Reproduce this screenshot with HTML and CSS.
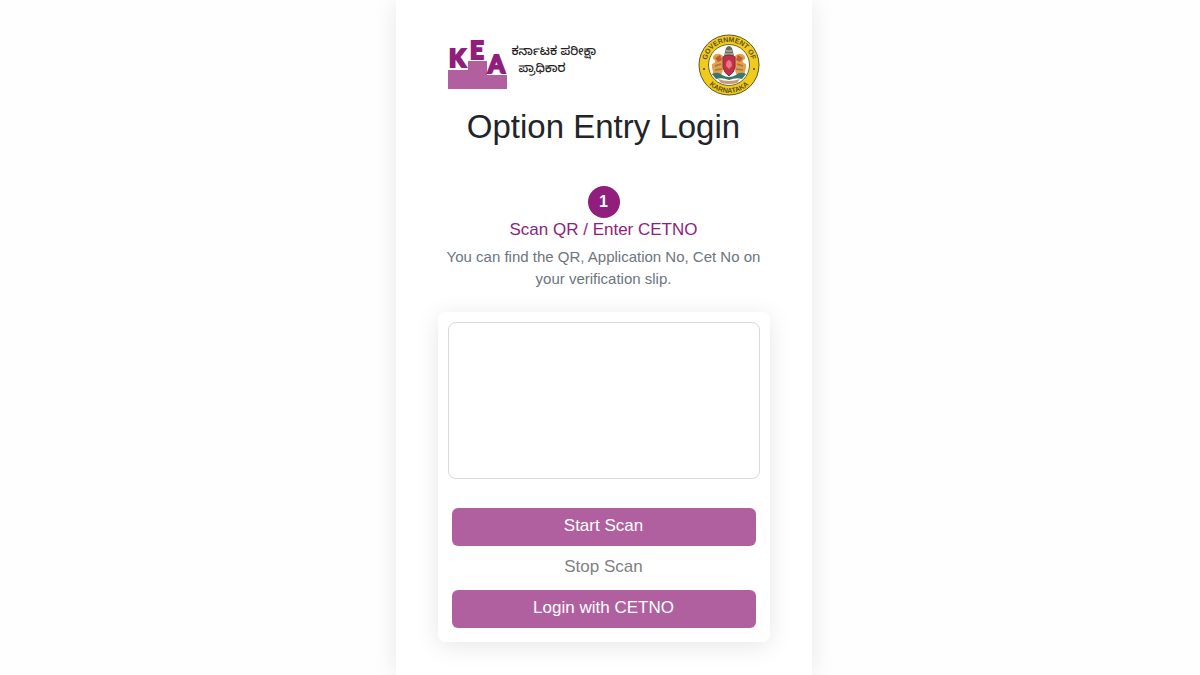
FILE: index.html
```html
<!DOCTYPE html>
<html lang="en">
<head>
    <meta charset="UTF-8">
    <meta name="viewport" content="width=device-width, initial-scale=1.0">
    <title>Option Entry Login</title>
    <link rel="stylesheet" href="styles.css">
</head>
<body>
    <main class="login-container">
        <header class="login-header">
            <div class="brand">
                <svg class="kea-logo" viewBox="0 0 60 52" role="img" aria-label="KEA">
                    <path d="M0 31H20V22H39V36H59V50H0Z" fill="#b25f9f"/>
                    <g class="kea-letters">
                        <text x="1" y="28">K</text>
                        <text x="22" y="20">E</text>
                        <text x="40" y="34">A</text>
                    </g>
                </svg>
                <p class="brand-name" lang="kn">ಕರ್ನಾಟಕ ಪರೀಕ್ಷಾ<span>ಪ್ರಾಧಿಕಾರ</span></p>
            </div>
            <svg class="emblem" viewBox="0 0 62 62" role="img" aria-label="Government of Karnataka">
                <defs>
                    <path id="arc-top" d="M9.100 38A23 23 0 1 1 52.900 38"/>
                    <path id="arc-bottom" d="M5.300 42A28 28 0 0 0 56.700 42"/>
                </defs>
                <circle cx="31" cy="31" r="30" fill="#f0cb1c" stroke="#5d5424"/>
                <circle cx="31" cy="31" r="20.500" fill="#fdfdf8" stroke="#75662a"/>
                <text class="seal-text"><textPath href="#arc-top" startOffset="50%">GOVERNMENT OF</textPath></text>
                <text class="seal-text"><textPath href="#arc-bottom" startOffset="50%">KARNATAKA</textPath></text>
                <circle cx="6" cy="35" r="1" fill="#4a4425"/>
                <circle cx="56" cy="35" r="1" fill="#4a4425"/>
                <!-- lions -->
                <path d="M26 23C21 17 14 20 15 25C18 26 18 29 14 30C13 35 17 38 14 41L23 42L25 36L28 34Z" fill="#e4a14c"/>
                <path d="M36 23C41 17 48 20 47 25C44 26 44 29 48 30C49 35 45 38 48 41L39 42L37 36L34 34Z" fill="#e4a14c"/>
                <path d="M17 24L22 21L24 26L20 28ZM45 24L40 21L38 26L42 28Z" fill="#c45a35"/>
                <path d="M17 32L23 30M17 36L24 35M45 32L39 30M45 36L38 35" stroke="#a4774a" stroke-width="1.500"/>
                <!-- capital and shield -->
                <path d="M26 22L28 14Q31 10 34 14L36 22Z" fill="#626c68"/>
                <path d="M28 17H34M27 20H35" stroke="#e9cf95"/>
                <path d="M25 23Q31 19 37 23V33Q36 39 31 42Q26 39 25 33Z" fill="#c52e49" stroke="#79343d"/>
                <path d="M28 32Q28 27 31 26Q34 27 34 32L31 35Z" fill="#e47b83"/>
                <path d="M14 40Q20 37 24 41Q31 45 38 41Q42 37 48 40L44 45Q38 43 31 46Q24 43 18 45Z" fill="#38796d"/>
                <path d="M20 45Q31 49 42 45L39 49Q31 51 23 49Z" fill="#c69a75"/>
            </svg>
        </header>

        <h1>Option Entry Login</h1>

        <section class="step">
            <span class="step-number">1</span>
            <h2>Scan QR / Enter CETNO</h2>
            <p>You can find the QR, Application No, Cet No on your verification slip.</p>
        </section>

        <section class="scan-card">
            <div class="scan-preview"></div>
            <div class="actions">
                <button type="button" class="btn btn-primary">Start Scan</button>
                <button type="button" class="btn btn-link">Stop Scan</button>
                <button type="button" class="btn btn-primary">Login with CETNO</button>
            </div>
        </section>
    </main>
</body>
</html>
```
FILE: styles.css
```css
* {
    box-sizing: border-box;
}

body {
    margin: 0;
    padding-left: 7px;
    background-color: #fefefe;
    color: #212529;
    font-family: "Liberation Sans", Arial, sans-serif;
}

.login-container {
    max-width: 416px;
    min-height: 100vh;
    margin: 0 auto;
    padding: 34px 42px;
    background-color: #fff;
    box-shadow: 0 0 24px rgba(0, 0, 0, 0.09);
}

.login-header {
    display: flex;
    justify-content: space-between;
    align-items: center;
    padding: 0 10px;
}

.brand {
    display: flex;
    align-items: flex-start;
    gap: 4px;
}

.kea-logo {
    width: 60px;
    height: 52px;
    overflow: visible;
}

.kea-letters {
    fill: #911d7d;
    stroke: #911d7d;
    stroke-width: 2px;
    font-family: Lato, sans-serif;
    font-size: 24px;
    font-weight: 900;
}

.brand-name {
    margin: 0;
    padding-top: 6px;
    font-family: "Noto Sans Kannada", "Noto Sans", sans-serif;
    font-size: 12px;
    font-weight: 500;
    line-height: 17px;
    color: #222;
}

.brand-name span {
    display: block;
    padding-left: 7px;
}

.emblem {
    width: 62px;
    height: 62px;
    overflow: visible;
}

.seal-text {
    font-size: 7px;
    font-weight: bold;
    fill: #5d521e;
    text-anchor: middle;
}

h1 {
    margin: 10px 0 38px;
    font-size: 33px;
    font-weight: 400;
    line-height: 42px;
    text-align: center;
}

.step {
    padding: 0 8px;
    text-align: center;
}

.step-number {
    display: flex;
    align-items: center;
    justify-content: center;
    width: 32px;
    height: 32px;
    margin: 0 auto;
    border-radius: 50%;
    background-color: #911d7d;
    color: #fff;
    font-size: 16px;
    font-weight: bold;
}

.step h2 {
    margin: 0 0 4px;
    color: #911d7d;
    font-size: 17px;
    font-weight: 400;
    line-height: 24px;
}

.step p {
    margin: 0;
    color: #6c757d;
    font-size: 15px;
    line-height: 22px;
}

.scan-card {
    margin-top: 22px;
    padding: 10px 10px 14px;
    border-radius: 8px;
    background-color: #fff;
    box-shadow: 0 4px 24px rgba(0, 0, 0, 0.1);
}

.scan-preview {
    height: 157px;
    border: 1px solid #d9d9d9;
    border-radius: 8px;
}

.actions {
    display: flex;
    flex-direction: column;
    gap: 3px;
    padding: 29px 4px 0;
}

.btn {
    height: 38px;
    padding: 0 12px 2px;
    border: 0;
    border-radius: 6px;
    font-family: inherit;
    font-size: 17px;
    cursor: pointer;
}

.btn-primary {
    background-color: #b0609f;
    color: #fff;
}

.btn-link {
    background: none;
    color: #808080;
}
```
